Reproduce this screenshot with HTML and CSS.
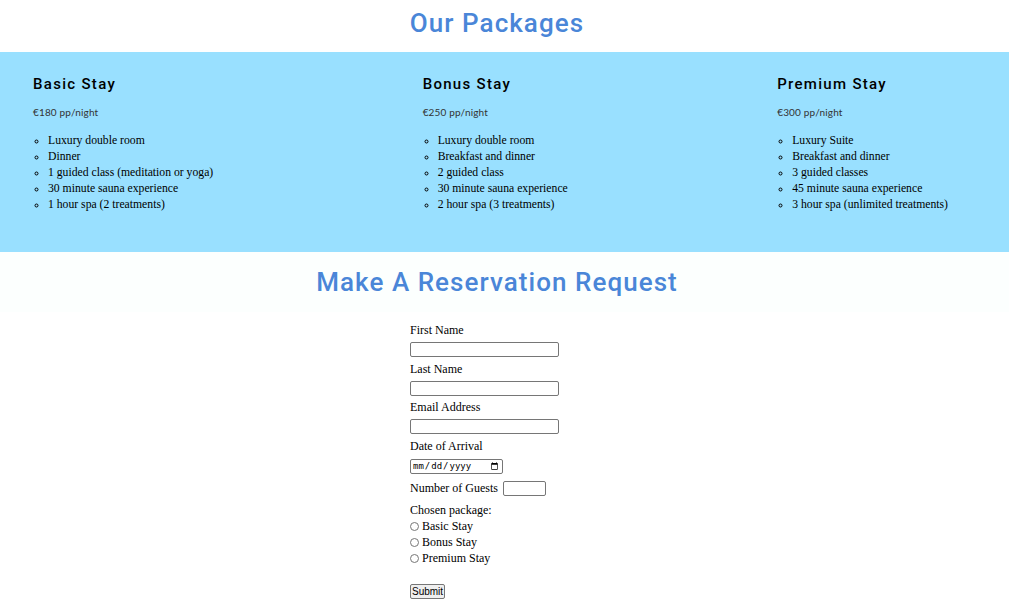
FILE: index.html
```html
<!DOCTYPE html>
<html>
<head>
<meta charset="utf-8">
<title>Our Packages</title>
<link rel="stylesheet" href="styles.css">
</head>
<body>
<header class="title-band">
  <h1 class="title">Our Packages</h1>
</header>
<section class="packages">
  <div class="package">
    <h2 class="package-name">Basic Stay</h2>
    <p class="price">€180 pp/night</p>
    <ul class="features">
      <li>Luxury double room</li>
      <li>Dinner</li>
      <li>1 guided class (meditation or yoga)</li>
      <li>30 minute sauna experience</li>
      <li>1 hour spa (2 treatments)</li>
    </ul>
  </div>
  <div class="package">
    <h2 class="package-name">Bonus Stay</h2>
    <p class="price">€250 pp/night</p>
    <ul class="features">
      <li>Luxury double room</li>
      <li>Breakfast and dinner</li>
      <li>2 guided class</li>
      <li>30 minute sauna experience</li>
      <li>2 hour spa (3 treatments)</li>
    </ul>
  </div>
  <div class="package">
    <h2 class="package-name">Premium Stay</h2>
    <p class="price">€300 pp/night</p>
    <ul class="features">
      <li>Luxury Suite</li>
      <li>Breakfast and dinner</li>
      <li>3 guided classes</li>
      <li>45 minute sauna experience</li>
      <li>3 hour spa (unlimited treatments)</li>
    </ul>
  </div>
</section>
<header class="title-band title-band-alt">
  <h1 class="title">Make A Reservation Request</h1>
</header>
<form class="reservation">
  <label class="field-label" for="fname">First Name</label>
  <input class="text-input" type="text" id="fname">
  <label class="field-label" for="lname">Last Name</label>
  <input class="text-input" type="text" id="lname">
  <label class="field-label" for="email">Email Address</label>
  <input class="text-input" type="email" id="email">
  <label class="field-label" for="arrival">Date of Arrival</label>
  <input class="date-input" type="date" id="arrival">
  <div class="guests-row">
    <label for="guests">Number of Guests</label>
    <input class="number-input" type="number" id="guests">
  </div>
  <div class="package-choice">
    <div class="choice-title">Chosen package:</div>
    <label class="radio-row"><input class="radio" type="radio" name="pkg">Basic Stay</label>
    <label class="radio-row"><input class="radio" type="radio" name="pkg">Bonus Stay</label>
    <label class="radio-row"><input class="radio" type="radio" name="pkg">Premium Stay</label>
  </div>
  <button class="submit" type="submit">Submit</button>
</form>
</body>
</html>
```
FILE: styles.css
```css
html, body {
  margin: 0;
  padding: 0;
  background: #ffffff;
}
body {
  font-family: "Liberation Serif", "Times New Roman", serif;
  font-size: 12px;
  color: #000;
}
.title-band {
  height: 52px;
  display: flex;
  align-items: center;
  justify-content: center;
  padding-right: 15px;
  padding-bottom: 6px;
  box-sizing: border-box;
}
.title-band-alt {
  height: 60px;
  padding-bottom: 0;
  background: #fcfffe;
}
.title {
  margin: 0;
  font-family: "Roboto", "Liberation Sans", sans-serif;
  font-weight: 500;
  font-size: 26px;
  letter-spacing: 1.05px;
  color: #4a86d8;
}
.packages {
  height: 200px;
  box-sizing: border-box;
  background: #99e0ff;
  display: flex;
  justify-content: space-between;
  padding: 23px 61px 0 33px;
}
.package-name {
  margin: 0;
  font-family: "Roboto", "Liberation Sans", sans-serif;
  font-weight: 500;
  font-size: 15px;
  letter-spacing: 1.3px;
  line-height: 18px;
  color: #000;
}
.price {
  margin: 12px 0 0;
  font-family: "Lato", "Liberation Sans", sans-serif;
  font-size: 10px;
  letter-spacing: 0.15px;
  line-height: 14px;
  color: #333;
}
.features {
  margin: 14px 0 0;
  padding-left: 15px;
  list-style-type: circle;
  font-size: 11.7px;
  line-height: 16px;
}
.reservation {
  width: 174px;
  margin: 0 auto;
  padding-top: 10px;
  padding-right: 15px;
  display: flex;
  flex-direction: column;
  align-items: flex-start;
}
.field-label {
  display: block;
  line-height: 16px;
  margin-bottom: 4px;
}
.text-input,
.date-input,
.number-input {
  box-sizing: border-box;
  height: 15px;
  margin: 0 0 3.5px;
  padding: 0 2px;
  border: 1px solid #767676;
  border-radius: 2px;
  background: #fff;
  font-size: 10px;
}
.text-input {
  width: 149px;
}
.date-input {
  width: 93px;
  margin-top: 1px;
  padding: 0 1px;
  font-family: "DejaVu Sans Mono", monospace;
  font-size: 9px;
  color: #000;
}
.guests-row {
  display: flex;
  align-items: center;
  gap: 5px;
  margin-top: 3px;
  height: 16px;
}
.number-input {
  width: 43px;
  margin: 0;
}
.package-choice {
  margin-top: 6px;
  line-height: 16px;
}
.radio-row {
  display: flex;
  align-items: center;
}
.radio {
  width: 9px;
  height: 9px;
  margin: 0 3px 0 0;
}
.submit {
  margin-top: 18px;
  height: 15px;
  padding: 0 1px;
  font-family: "Liberation Sans", Arial, sans-serif;
  font-size: 10px;
  line-height: 13px;
  border: 1px solid #767676;
  border-radius: 2px;
  background: #efefef;
  color: #000;
}
```
